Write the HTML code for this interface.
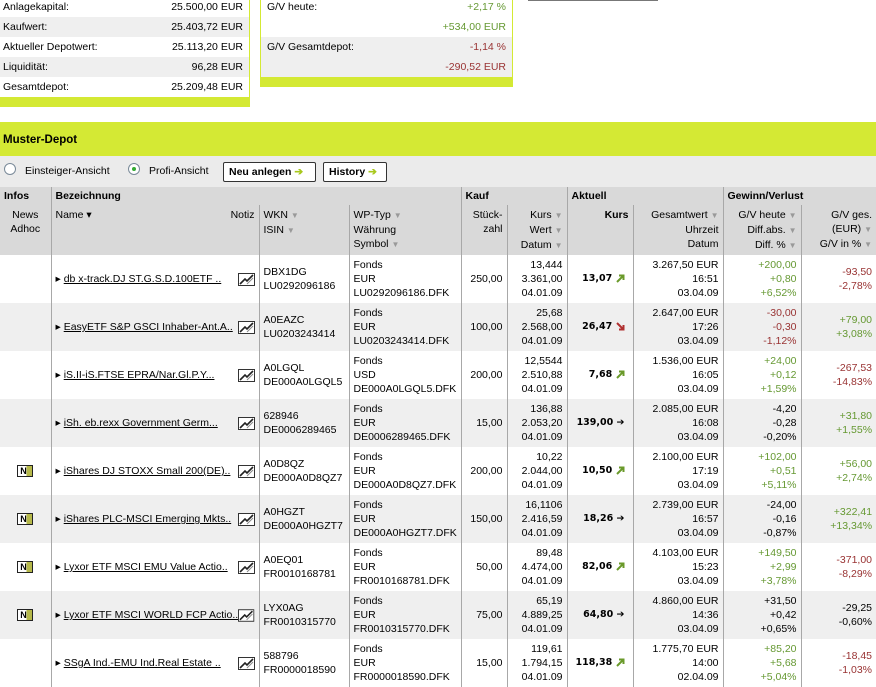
<!DOCTYPE html>
<html><head><meta charset="utf-8">
<style>
*{margin:0;padding:0;box-sizing:border-box}
body{width:876px;height:687px;overflow:hidden;background:#fff;font-family:"Liberation Sans",Arial,sans-serif;font-size:10.5px;color:#000;position:relative}
.abs{position:absolute}
.box1{left:0;top:-3px;width:250px;border-right:1px solid #d4e934}
.box1 div,.box2 div{height:20px;line-height:20px;padding:0 6px 0 3px;display:flex;justify-content:space-between}
.g{background:#efefef}
.bar{background:#d4e934;height:10px!important}
.box2{left:260px;top:-3px;width:253px;border-left:1px solid #d4e934;border-right:1px solid #d4e934}
.box2 div{padding:0 6px}
.gr{color:#669933}.rd{color:#993333}
.hdr{left:0;top:122px;width:876px;height:34px;background:#d4e934;font-weight:bold;font-size:11.5px;line-height:36px;padding-left:3px}
.tb{left:0;top:156px;width:876px;height:31px;background:#ebebeb}
.btn{position:absolute;top:6px;height:20px;border:1px solid #333;border-radius:2px;background:#fff;font-weight:bold;line-height:18px;padding:0 5px;font-size:10.5px}
.ar{color:#a8c81c}
.radio{position:absolute;top:7px;width:12px;height:12px;border:1px solid #7a8a99;border-radius:50%;background:#fff}
table{position:absolute;left:0;top:187px;border-collapse:collapse;table-layout:fixed;width:876px}
td{vertical-align:middle;padding:0 4px;line-height:14px;white-space:nowrap;overflow:hidden}
.h1 td{background:#d9d9d9;height:18px;font-weight:bold;vertical-align:middle;line-height:18px}
.h2 td{background:#d9d9d9;height:50px;vertical-align:top;padding-top:3px}
.bl{border-left:1px solid #a8a8a8}
.r{text-align:right}.c{text-align:center}
.dn{color:#999;font-size:8px}
tr.d td{height:48px}
tr.e td{background:#efefef}
.nm{display:flex;justify-content:space-between;align-items:center}
.nm a{color:#000;text-decoration:underline}
.k{font-weight:bold;font-family:"DejaVu Sans",sans-serif;font-size:9.5px;text-align:right;padding-right:8px}
.nic{display:inline-block;width:16px;height:12px;border:1px solid #222;font-weight:bold;font-size:9px;line-height:10px;text-align:left;padding-left:2px;background:linear-gradient(90deg,#fff 60%,#b5b84a 60%)}
svg{vertical-align:middle}
</style></head><body>
<svg width="0" height="0" style="position:absolute"><defs>
<symbol id="ch" viewBox="0 0 17 13"><rect x="0.5" y="0.5" width="16" height="12" fill="#fff" stroke="#333"/><path d="M2 11 L7 6 L9 8 L15 2" stroke="#222" stroke-width="1.6" fill="none"/><path d="M9 11 L15 5" stroke="#888" stroke-width="1"/></symbol>
<symbol id="up" viewBox="0 0 9 9"><path d="M1 8 L7 2 M3 1.5 H7.5 V6" stroke="#6a9a2a" stroke-width="2" fill="none"/></symbol>
<symbol id="dw" viewBox="0 0 9 9"><path d="M1 1 L7 7 M7.5 3 V7.5 H3" stroke="#b03030" stroke-width="2" fill="none"/></symbol>
</defs></svg>
<div class="abs box1">
<div><span>Anlagekapital:</span><span>25.500,00 EUR</span></div>
<div class="g"><span>Kaufwert:</span><span>25.403,72 EUR</span></div>
<div><span>Aktueller Depotwert:</span><span>25.113,20 EUR</span></div>
<div class="g"><span>Liquidität:</span><span>96,28 EUR</span></div>
<div><span>Gesamtdepot:</span><span>25.209,48 EUR</span></div>
<div class="bar"></div>
</div>
<div class="abs box2">
<div><span>G/V heute:</span><span class="gr">+2,17 %</span></div>
<div><span></span><span class="gr">+534,00 EUR</span></div>
<div class="g"><span>G/V Gesamtdepot:</span><span class="rd">-1,14 %</span></div>
<div class="g"><span></span><span class="rd">-290,52 EUR</span></div>
<div class="bar"></div>
</div>
<div class="abs" style="left:528px;top:0;width:130px;height:1px;background:#777"></div>
<div class="abs hdr">Muster-Depot</div>
<div class="abs tb">
<div class="radio" style="left:4px"></div><span class="abs" style="left:25px;top:9px">Einsteiger-Ansicht</span>
<div class="radio" style="left:128px"><div style="width:4px;height:4px;background:#3a3;border-radius:50%;margin:3px"></div></div><span class="abs" style="left:149px;top:9px">Profi-Ansicht</span>
<div class="btn" style="left:223px;width:93px">Neu anlegen <span class="ar">➔</span></div>
<div class="btn" style="left:323px;width:64px">History <span class="ar">➔</span></div>
</div>
<table>
<colgroup><col style="width:51px"><col style="width:208px"><col style="width:90px"><col style="width:112px"><col style="width:46px"><col style="width:60px"><col style="width:66px"><col style="width:90px"><col style="width:78px"><col style="width:75px"></colgroup>
<tr class="h1"><td>Infos</td><td class="bl" colspan="3">Bezeichnung</td><td class="bl" colspan="2">Kauf</td><td class="bl" colspan="2">Aktuell</td><td class="bl" colspan="2">Gewinn/Verlust</td></tr>
<tr class="h2"><td class="c">News<br>Adhoc</td><td class="bl"><div class="nm"><span>Name ▾</span><span>Notiz</span></div></td><td class="bl">WKN <span class="dn">▼</span><br>ISIN <span class="dn">▼</span></td><td class="bl">WP-Typ <span class="dn">▼</span><br>Währung<br>Symbol <span class="dn">▼</span></td><td class="bl r">Stück-<br>zahl</td><td class="bl r">Kurs <span class="dn">▼</span><br>Wert <span class="dn">▼</span><br>Datum <span class="dn">▼</span></td><td class="bl r" style="font-weight:bold">Kurs</td><td class="bl r">Gesamtwert <span class="dn">▼</span><br>Uhrzeit<br>Datum</td><td class="bl r">G/V heute <span class="dn">▼</span><br>Diff.abs. <span class="dn">▼</span><br>Diff. % <span class="dn">▼</span></td><td class="bl r">G/V ges.<br>(EUR) <span class="dn">▼</span><br>G/V in % <span class="dn">▼</span></td></tr>

<tr class="d"><td></td><td class="bl"><div class="nm"><span>▸ <a>db x-track.DJ ST.G.S.D.100ETF ..</a></span><svg width="17" height="13"><use href="#ch"/></svg></div></td><td class="bl">DBX1DG<br>LU0292096186</td><td class="bl">Fonds<br>EUR<br>LU0292096186.DFK</td><td class="bl r">250,00</td><td class="bl r">13,444<br>3.361,00<br>04.01.09</td><td class="bl k">13,07 <svg width="9" height="9"><use href="#up"/></svg></td><td class="bl r">3.267,50 EUR<br>16:51<br>03.04.09</td><td class="bl r gr">+200,00<br>+0,80<br>+6,52%</td><td class="bl r rd">-93,50<br>-2,78%</td></tr>
<tr class="d e"><td></td><td class="bl"><div class="nm"><span>▸ <a>EasyETF S&amp;P GSCI Inhaber-Ant.A..</a></span><svg width="17" height="13"><use href="#ch"/></svg></div></td><td class="bl">A0EAZC<br>LU0203243414</td><td class="bl">Fonds<br>EUR<br>LU0203243414.DFK</td><td class="bl r">100,00</td><td class="bl r">25,68<br>2.568,00<br>04.01.09</td><td class="bl k">26,47 <svg width="9" height="9"><use href="#dw"/></svg></td><td class="bl r">2.647,00 EUR<br>17:26<br>03.04.09</td><td class="bl r rd">-30,00<br>-0,30<br>-1,12%</td><td class="bl r gr">+79,00<br>+3,08%</td></tr>
<tr class="d"><td></td><td class="bl"><div class="nm"><span>▸ <a>iS.II-iS.FTSE EPRA/Nar.Gl.P.Y...</a></span><svg width="17" height="13"><use href="#ch"/></svg></div></td><td class="bl">A0LGQL<br>DE000A0LGQL5</td><td class="bl">Fonds<br>USD<br>DE000A0LGQL5.DFK</td><td class="bl r">200,00</td><td class="bl r">12,5544<br>2.510,88<br>04.01.09</td><td class="bl k">7,68 <svg width="9" height="9"><use href="#up"/></svg></td><td class="bl r">1.536,00 EUR<br>16:05<br>03.04.09</td><td class="bl r gr">+24,00<br>+0,12<br>+1,59%</td><td class="bl r rd">-267,53<br>-14,83%</td></tr>
<tr class="d e"><td></td><td class="bl"><div class="nm"><span>▸ <a>iSh. eb.rexx Government Germ...</a></span><svg width="17" height="13"><use href="#ch"/></svg></div></td><td class="bl">628946<br>DE0006289465</td><td class="bl">Fonds<br>EUR<br>DE0006289465.DFK</td><td class="bl r">15,00</td><td class="bl r">136,88<br>2.053,20<br>04.01.09</td><td class="bl k">139,00 ➔</td><td class="bl r">2.085,00 EUR<br>16:08<br>03.04.09</td><td class="bl r">-4,20<br>-0,28<br>-0,20%</td><td class="bl r gr">+31,80<br>+1,55%</td></tr>
<tr class="d"><td class="c"><span class="nic">N</span></td><td class="bl"><div class="nm"><span>▸ <a>iShares DJ STOXX Small 200(DE)..</a></span><svg width="17" height="13"><use href="#ch"/></svg></div></td><td class="bl">A0D8QZ<br>DE000A0D8QZ7</td><td class="bl">Fonds<br>EUR<br>DE000A0D8QZ7.DFK</td><td class="bl r">200,00</td><td class="bl r">10,22<br>2.044,00<br>04.01.09</td><td class="bl k">10,50 <svg width="9" height="9"><use href="#up"/></svg></td><td class="bl r">2.100,00 EUR<br>17:19<br>03.04.09</td><td class="bl r gr">+102,00<br>+0,51<br>+5,11%</td><td class="bl r gr">+56,00<br>+2,74%</td></tr>
<tr class="d e"><td class="c"><span class="nic">N</span></td><td class="bl"><div class="nm"><span>▸ <a>iShares PLC-MSCI Emerging Mkts..</a></span><svg width="17" height="13"><use href="#ch"/></svg></div></td><td class="bl">A0HGZT<br>DE000A0HGZT7</td><td class="bl">Fonds<br>EUR<br>DE000A0HGZT7.DFK</td><td class="bl r">150,00</td><td class="bl r">16,1106<br>2.416,59<br>04.01.09</td><td class="bl k">18,26 ➔</td><td class="bl r">2.739,00 EUR<br>16:57<br>03.04.09</td><td class="bl r">-24,00<br>-0,16<br>-0,87%</td><td class="bl r gr">+322,41<br>+13,34%</td></tr>
<tr class="d"><td class="c"><span class="nic">N</span></td><td class="bl"><div class="nm"><span>▸ <a>Lyxor ETF MSCI EMU Value Actio..</a></span><svg width="17" height="13"><use href="#ch"/></svg></div></td><td class="bl">A0EQ01<br>FR0010168781</td><td class="bl">Fonds<br>EUR<br>FR0010168781.DFK</td><td class="bl r">50,00</td><td class="bl r">89,48<br>4.474,00<br>04.01.09</td><td class="bl k">82,06 <svg width="9" height="9"><use href="#up"/></svg></td><td class="bl r">4.103,00 EUR<br>15:23<br>03.04.09</td><td class="bl r gr">+149,50<br>+2,99<br>+3,78%</td><td class="bl r rd">-371,00<br>-8,29%</td></tr>
<tr class="d e"><td class="c"><span class="nic">N</span></td><td class="bl"><div class="nm"><span>▸ <a>Lyxor ETF MSCI WORLD FCP Actio..</a></span><svg width="17" height="13"><use href="#ch"/></svg></div></td><td class="bl">LYX0AG<br>FR0010315770</td><td class="bl">Fonds<br>EUR<br>FR0010315770.DFK</td><td class="bl r">75,00</td><td class="bl r">65,19<br>4.889,25<br>04.01.09</td><td class="bl k">64,80 ➔</td><td class="bl r">4.860,00 EUR<br>14:36<br>03.04.09</td><td class="bl r">+31,50<br>+0,42<br>+0,65%</td><td class="bl r">-29,25<br>-0,60%</td></tr>
<tr class="d"><td></td><td class="bl"><div class="nm"><span>▸ <a>SSgA Ind.-EMU Ind.Real Estate ..</a></span><svg width="17" height="13"><use href="#ch"/></svg></div></td><td class="bl">588796<br>FR0000018590</td><td class="bl">Fonds<br>EUR<br>FR0000018590.DFK</td><td class="bl r">15,00</td><td class="bl r">119,61<br>1.794,15<br>04.01.09</td><td class="bl k">118,38 <svg width="9" height="9"><use href="#up"/></svg></td><td class="bl r">1.775,70 EUR<br>14:00<br>02.04.09</td><td class="bl r gr">+85,20<br>+5,68<br>+5,04%</td><td class="bl r rd">-18,45<br>-1,03%</td></tr>
</table>
</body></html>
